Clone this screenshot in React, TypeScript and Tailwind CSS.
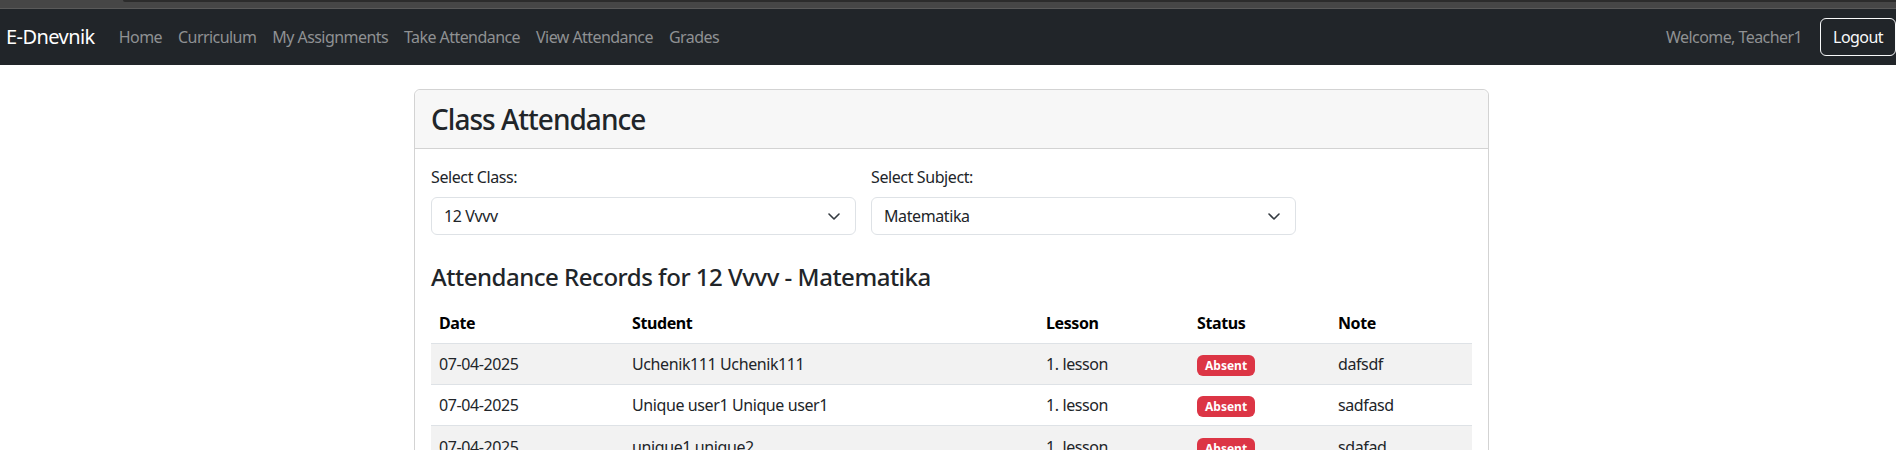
import React from 'react';

const navLinks = ['Home', 'Curriculum', 'My Assignments', 'Take Attendance', 'View Attendance', 'Grades'];

const records = [
  { date: '07-04-2025', student: 'Uchenik111 Uchenik111', lesson: '1. lesson', status: 'Absent', note: 'dafsdf' },
  { date: '07-04-2025', student: 'Unique user1 Unique user1', lesson: '1. lesson', status: 'Absent', note: 'sadfasd' },
  { date: '07-04-2025', student: 'unique1 unique2', lesson: '1. lesson', status: 'Absent', note: 'sdafad' },
];

const Chevron = () => (
  <svg width="12" height="7" viewBox="0 0 12 7" fill="none" className="shrink-0">
    <path d="M1 1l5 5 5-5" stroke="#343a40" strokeWidth="1.6" strokeLinecap="round" strokeLinejoin="round" />
  </svg>
);

const SelectBox = ({ label, value }: { label: string; value: string }) => (
  <div className="w-[425px]">
    <div className="mb-2 leading-6 text-[#212529]">{label}</div>
    <div className="flex h-[38px] items-center justify-between rounded-md border border-[#dee2e6] bg-white pl-3 pr-[15px]">
      <span className="text-[#212529]">{value}</span>
      <Chevron />
    </div>
  </div>
);

export default function App() {
  return (
    <div className="min-h-screen bg-white font-['Noto_Sans','Liberation_Sans',sans-serif] text-base tracking-[-0.025em] text-[#212529]">
      <div className="relative h-[8px] bg-[#464646]">
        <div className="absolute left-[123px] right-0 top-0 h-[2px] rounded-bl-md bg-[#2c2c2c]" />
      </div>
      <div className="h-px bg-[#5a5a5a]" />

      <nav className="flex h-[56px] items-center bg-[#212529] pl-[6px] tracking-[-0.035em]">
        <span className="mr-4 text-xl leading-[30px] text-white">E-Dnevnik</span>
        <div className="flex items-center">
          {navLinks.map((link) => (
            <span key={link} className="px-2 leading-6 text-[#8f9193]">
              {link}
            </span>
          ))}
        </div>
        <div className="ml-auto flex items-center">
          <span className="mr-[18px] text-[#8f9193]">Welcome, Teacher1</span>
          <button className="h-[38px] rounded-md border border-[#f8f9fa] px-3 text-[#f8f9fa]">Logout</button>
        </div>
      </nav>

      <div className="ml-[414px] mt-[24px] w-[1075px] rounded-md border border-[#d3d3d3]">
        <div className="flex h-[59px] items-center rounded-t-md border-b border-[#d3d3d3] bg-[#f7f7f7] px-4">
          <h3 className="text-[28px] font-medium leading-[34px] tracking-[-0.035em]">Class Attendance</h3>
        </div>
        <div className="px-4 pt-[16px]">
          <div className="flex gap-[15px]">
            <SelectBox label="Select Class:" value="12 Vvvv" />
            <SelectBox label="Select Subject:" value="Matematika" />
          </div>

          <h4 className="mb-[12px] mt-[27px] text-2xl font-medium leading-[29px] tracking-[-0.02em]">
            Attendance Records for 12 Vvvv - Matematika
          </h4>

          <table className="w-full table-fixed border-collapse text-left">
            <colgroup>
              <col className="w-[193px]" />
              <col className="w-[414px]" />
              <col className="w-[151px]" />
              <col className="w-[141px]" />
              <col />
            </colgroup>
            <thead>
              <tr className="border-b border-[#dee2e6]">
                {['Date', 'Student', 'Lesson', 'Status', 'Note'].map((h) => (
                  <th key={h} className="px-2 py-2 font-bold leading-6 text-black">
                    {h}
                  </th>
                ))}
              </tr>
            </thead>
            <tbody>
              {records.map((r, i) => (
                <tr key={i} className={i % 2 === 0 ? 'border-b border-[#dee2e6] bg-[#f2f2f2]' : 'border-b border-[#dee2e6] bg-white'}>
                  <td className="px-2 py-2 leading-6">{r.date}</td>
                  <td className="px-2 py-2 leading-6">{r.student}</td>
                  <td className="px-2 py-2 leading-6">{r.lesson}</td>
                  <td className="px-2 py-2 leading-6">
                    <span className="inline-block rounded-md bg-[#dc3545] px-[8px] py-[3px] align-middle text-xs font-bold leading-[15px] tracking-normal text-white">
                      {r.status}
                    </span>
                  </td>
                  <td className="px-2 py-2 leading-6">{r.note}</td>
                </tr>
              ))}
            </tbody>
          </table>
          <div className="h-4" />
        </div>
      </div>
    </div>
  );
}
